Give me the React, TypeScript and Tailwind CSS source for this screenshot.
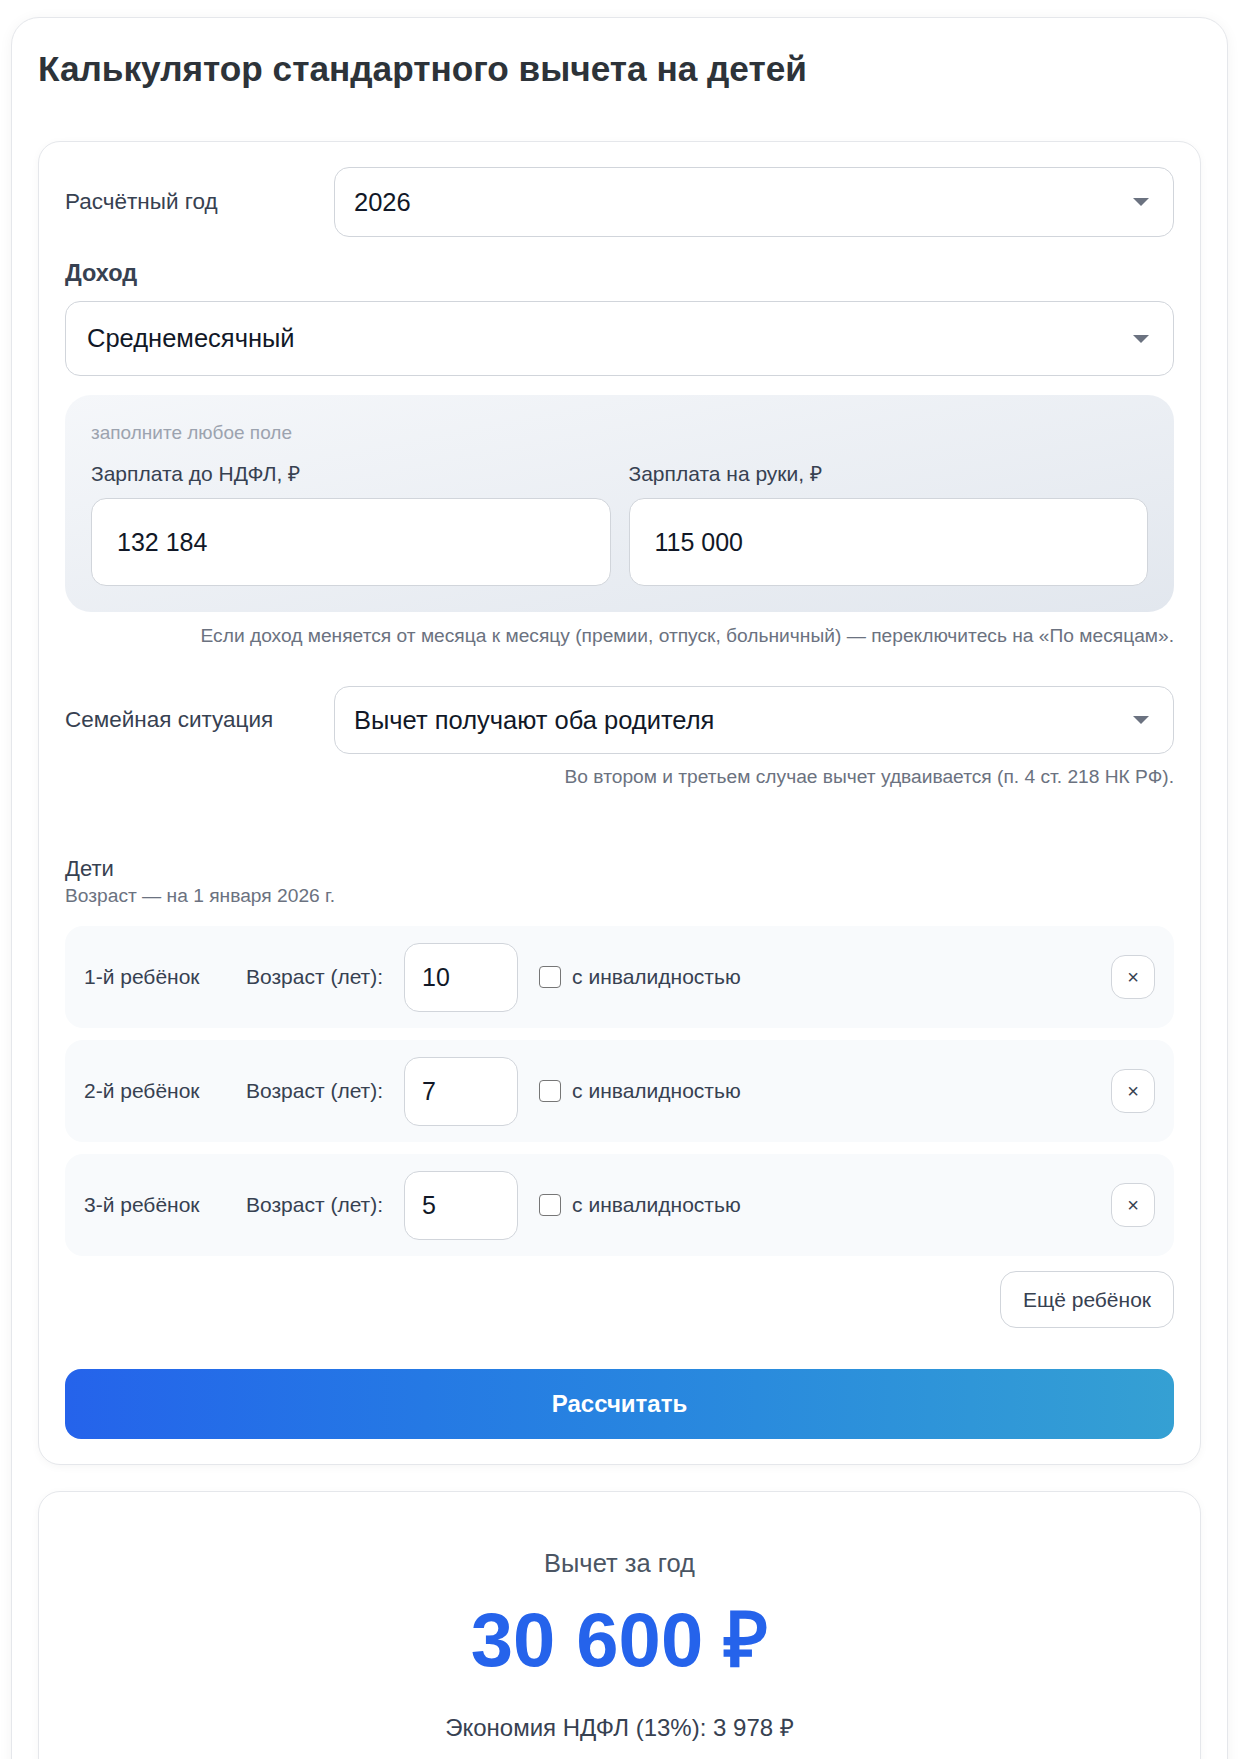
import React from 'react';

const children = [
  { name: '1-й ребёнок', age: '10' },
  { name: '2-й ребёнок', age: '7' },
  { name: '3-й ребёнок', age: '5' },
];

function Caret() {
  return (
    <svg width="16" height="8" viewBox="0 0 16 8" className="shrink-0">
      <path d="M0 0 L16 0 L8 8 Z" fill="#6b7280" />
    </svg>
  );
}

function SelectBox({ value, height }: { value: string; height: string }) {
  return (
    <div
      className={`flex flex-1 items-center justify-between rounded-[15px] border border-[#d1d5db] bg-white pl-[19px] pr-[24px] text-[25.5px] text-[#111827] ${height}`}
    >
      <span>{value}</span>
      <Caret />
    </div>
  );
}

export default function App() {
  return (
    <div className="min-h-screen bg-white pt-[17px] pl-[11px] pr-[10px] font-['Liberation_Sans',Arial,sans-serif]">
      <div className="rounded-[28px] border border-[#e5e7eb] bg-white px-[26px] pt-[30px] pb-[60px] shadow-[0_2px_14px_rgba(0,0,0,0.05)]">
        <h1 className="text-[35.2px] font-bold leading-[42px] text-[#2d3339]">
          Калькулятор стандартного вычета на детей
        </h1>

        <div className="mt-[51px] rounded-[22px] border border-[#e5e7eb] bg-white px-[26px] pt-[25px] pb-[25px] shadow-[0_2px_8px_rgba(0,0,0,0.04)]">
          {/* year */}
          <div className="flex items-center">
            <div className="w-[269px] text-[22.5px] text-[#374151]">Расчётный год</div>
            <SelectBox value="2026" height="h-[70px]" />
          </div>

          {/* income */}
          <div className="mt-[22px] text-[23.5px] font-bold leading-[28px] text-[#374151]">Доход</div>
          <div className="mt-[14px] flex">
            <div className="flex h-[75px] flex-1 items-center justify-between rounded-[15px] border border-[#d1d5db] bg-white pl-[21px] pr-[24px] text-[25.5px] text-[#111827]">
              <span>Среднемесячный</span>
              <Caret />
            </div>
          </div>

          <div className="mt-[19px] rounded-[26px] bg-linear-to-br from-[#f5f7fa] to-[#e2e7ee] px-[26px] pt-[27px] pb-[26px]">
            <div className="text-[19px] leading-[22px] text-[#9ca3af]">заполните любое поле</div>
            <div className="mt-[18px] grid grid-cols-2 gap-[18px]">
              {[
                { label: 'Зарплата до НДФЛ, ₽', value: '132 184' },
                { label: 'Зарплата на руки, ₽', value: '115 000' },
              ].map((f) => (
                <div key={f.label}>
                  <div className="text-[21px] leading-[24px] text-[#374151]">{f.label}</div>
                  <input
                    readOnly
                    value={f.value}
                    className="mt-[12px] h-[88px] w-full rounded-[15px] border border-[#d1d5db] bg-white px-[25px] text-[25px] text-[#111827] outline-none"
                  />
                </div>
              ))}
            </div>
          </div>

          <p className="mt-[13px] text-right text-[19.2px] leading-[22px] text-[#6b7280]">
            Если доход меняется от месяца к месяцу (премии, отпуск, больничный) — переключитесь на «По месяцам».
          </p>

          {/* family */}
          <div className="mt-[39px] flex items-center">
            <div className="w-[269px] text-[22.5px] text-[#374151]">Семейная ситуация</div>
            <SelectBox value="Вычет получают оба родителя" height="h-[68px]" />
          </div>
          <p className="mt-[12px] text-right text-[19.2px] leading-[22px] text-[#6b7280]">
            Во втором и третьем случае вычет удваивается (п. 4 ст. 218 НК РФ).
          </p>

          {/* children */}
          <div className="mt-[69px] text-[22px] leading-[24px] text-[#374151]">Дети</div>
          <div className="mt-[4px] text-[19.2px] leading-[22px] text-[#6b7280]">Возраст — на 1 января 2026 г.</div>

          <div className="mt-[19px] flex flex-col gap-[12px]">
            {children.map((c) => (
              <div
                key={c.name}
                className="flex h-[102px] items-center gap-[21px] rounded-[18px] bg-[#f8fafc] pl-[19px] pr-[19px] text-[21px] text-[#374151]"
              >
                <span className="w-[141px]">{c.name}</span>
                <span>Возраст (лет):</span>
                <input
                  readOnly
                  value={c.age}
                  className="h-[69px] w-[114px] rounded-[15px] border border-[#d1d5db] bg-white px-[17px] text-[25px] text-[#111827] outline-none"
                />
                <label className="flex items-center gap-[11px]">
                  <span className="h-[22px] w-[22px] rounded-[4px] border-[1.5px] border-[#767676] bg-white" />
                  <span>с инвалидностью</span>
                </label>
                <button className="ml-auto flex h-[44px] w-[44px] items-center justify-center rounded-[14px] border border-[#d1d5db] bg-white text-[20px] text-[#374151]">
                  ×
                </button>
              </div>
            ))}
          </div>

          <div className="mt-[15px] flex justify-end">
            <button className="h-[57px] rounded-[16px] border border-[#d1d5db] bg-white px-[22px] text-[21px] text-[#374151]">
              Ещё ребёнок
            </button>
          </div>

          <button className="mt-[41px] h-[70px] w-full rounded-[16px] bg-linear-to-r from-[#2563eb] to-[#35a0d3] text-[24px] font-bold text-white">
            Рассчитать
          </button>
        </div>

        {/* result */}
        <div className="mt-[26px] rounded-[22px] border border-[#e5e7eb] bg-white pt-[56px] pb-[60px] text-center shadow-[0_2px_8px_rgba(0,0,0,0.04)]">
          <div className="text-[25.5px] leading-[30px] text-[#4b5563]">Вычет за год</div>
          <div className="mt-[19px] text-[76px] font-bold leading-[86px] text-[#2563eb]">30 600 ₽</div>
          <div className="mt-[31px] text-[24px] leading-[28px] text-[#374151]">Экономия НДФЛ (13%): 3 978 ₽</div>
        </div>
      </div>
    </div>
  );
}
